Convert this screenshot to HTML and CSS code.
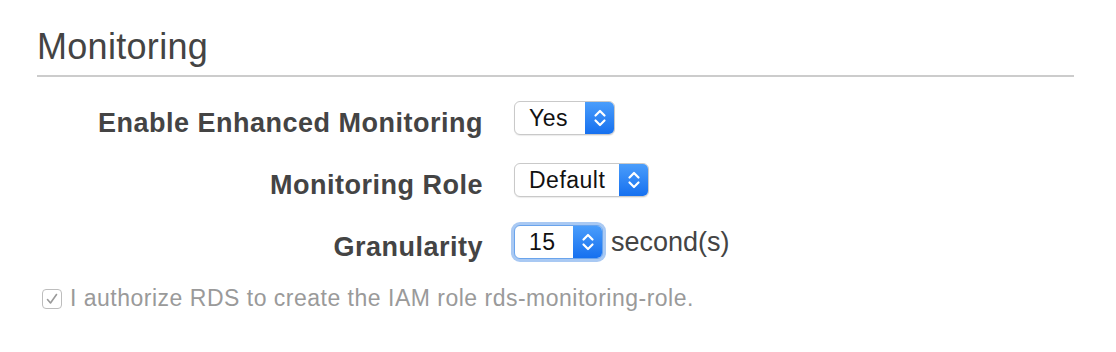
FILE: index.html
```html
<!DOCTYPE html>
<html lang="en">

<head>
    <meta charset="utf-8">
    <meta name="viewport" content="width=device-width, initial-scale=1.0">
    <title>Monitoring</title>
    <link rel="stylesheet" href="styles.css">
</head>

<body>
    <section class="panel">
        <h2 class="titel">Monitoring</h2>

        <div class="felter">
            <label class="etiket">Enable Enhanced Monitoring</label>
            <div class="felt">
                <div class="vaelger">
                    <span class="vaerdi">Yes</span>
                    <span class="pile">
                        <svg width="14" height="22" viewBox="0 0 14 22">
                            <path d="M2.5 8.5 L7 4 L11.5 8.5 M2.5 13.5 L7 18 L11.5 13.5" fill="none" stroke="#fff" stroke-width="2.2" stroke-linecap="round" stroke-linejoin="round"/>
                        </svg>
                    </span>
                </div>
            </div>

            <label class="etiket">Monitoring Role</label>
            <div class="felt">
                <div class="vaelger">
                    <span class="vaerdi">Default</span>
                    <span class="pile">
                        <svg width="14" height="22" viewBox="0 0 14 22">
                            <path d="M2.5 8.5 L7 4 L11.5 8.5 M2.5 13.5 L7 18 L11.5 13.5" fill="none" stroke="#fff" stroke-width="2.2" stroke-linecap="round" stroke-linejoin="round"/>
                        </svg>
                    </span>
                </div>
            </div>

            <label class="etiket">Granularity</label>
            <div class="felt">
                <div class="vaelger fokus">
                    <span class="vaerdi kort">15</span>
                    <span class="pile">
                        <svg width="14" height="22" viewBox="0 0 14 22">
                            <path d="M2.5 8.5 L7 4 L11.5 8.5 M2.5 13.5 L7 18 L11.5 13.5" fill="none" stroke="#fff" stroke-width="2.2" stroke-linecap="round" stroke-linejoin="round"/>
                        </svg>
                    </span>
                </div>
                <span class="enhed">second(s)</span>
            </div>
        </div>

        <div class="tilladelse">
            <span class="boks">
                <svg width="14" height="14" viewBox="0 0 14 14">
                    <path d="M2.5 7.5 L5.5 11 L11.5 2.5" fill="none" stroke="#9a9a9a" stroke-width="1.6" stroke-linecap="round" stroke-linejoin="round"/>
                </svg>
            </span>
            <span>I authorize RDS to create the IAM role rds-monitoring-role.</span>
        </div>
    </section>
</body>

</html>
```

FILE: styles.css
```css
body {
    background-color: #ffffff;
    margin: 0;
    padding: 0;
    font-family: "Liberation Sans", Arial, sans-serif;
    color: #444444;
}

.panel {
    padding: 22px 42px 0 37px;
}

.titel {
    margin: 0;
    font-size: 36px;
    font-weight: 400;
    letter-spacing: 0.3px;
    line-height: 50px;
    padding-bottom: 3px;
    border-bottom: 2px solid #cccccc;
}

.felter {
    display: grid;
    grid-template-columns: 446px auto;
    grid-auto-rows: 62px;
    column-gap: 31px;
    align-items: center;
    margin-top: 10px;
}

.etiket {
    text-align: right;
    font-size: 27px;
    font-weight: 700;
    letter-spacing: 0.5px;
    padding-top: 10px;
}

.felt {
    display: flex;
    align-items: center;
    gap: 8px;
}

.vaelger {
    display: flex;
    height: 32px;
    border: 1px solid #c9c9c9;
    border-radius: 6px;
    background-color: white;
    overflow: hidden;
    box-shadow: 0 1px 1px rgba(0, 0, 0, 0.08);
}

.vaerdi {
    display: flex;
    align-items: center;
    padding: 0 14px 0 14px;
    font-size: 23px;
    letter-spacing: 0.5px;
    color: #111111;
    min-width: 42px;
}

.kort {
    min-width: 30px;
}

.pile {
    display: flex;
    align-items: center;
    justify-content: center;
    width: 29px;
    background: linear-gradient(#4a9dfb, #1670ef);
}

.fokus {
    border-color: #6aa4ec;
    box-shadow: 0 0 0 3px #a9c9f3;
}

.enhed {
    font-size: 27px;
}

.tilladelse {
    display: flex;
    align-items: center;
    gap: 8px;
    margin-top: 12px;
    padding-left: 5px;
    font-size: 23px;
    letter-spacing: 0.5px;
    color: #9a9a9a;
}

.boks {
    display: flex;
    align-items: center;
    justify-content: center;
    width: 18px;
    height: 18px;
    border: 1px solid #bdbdbd;
    border-radius: 4px;
}
```
